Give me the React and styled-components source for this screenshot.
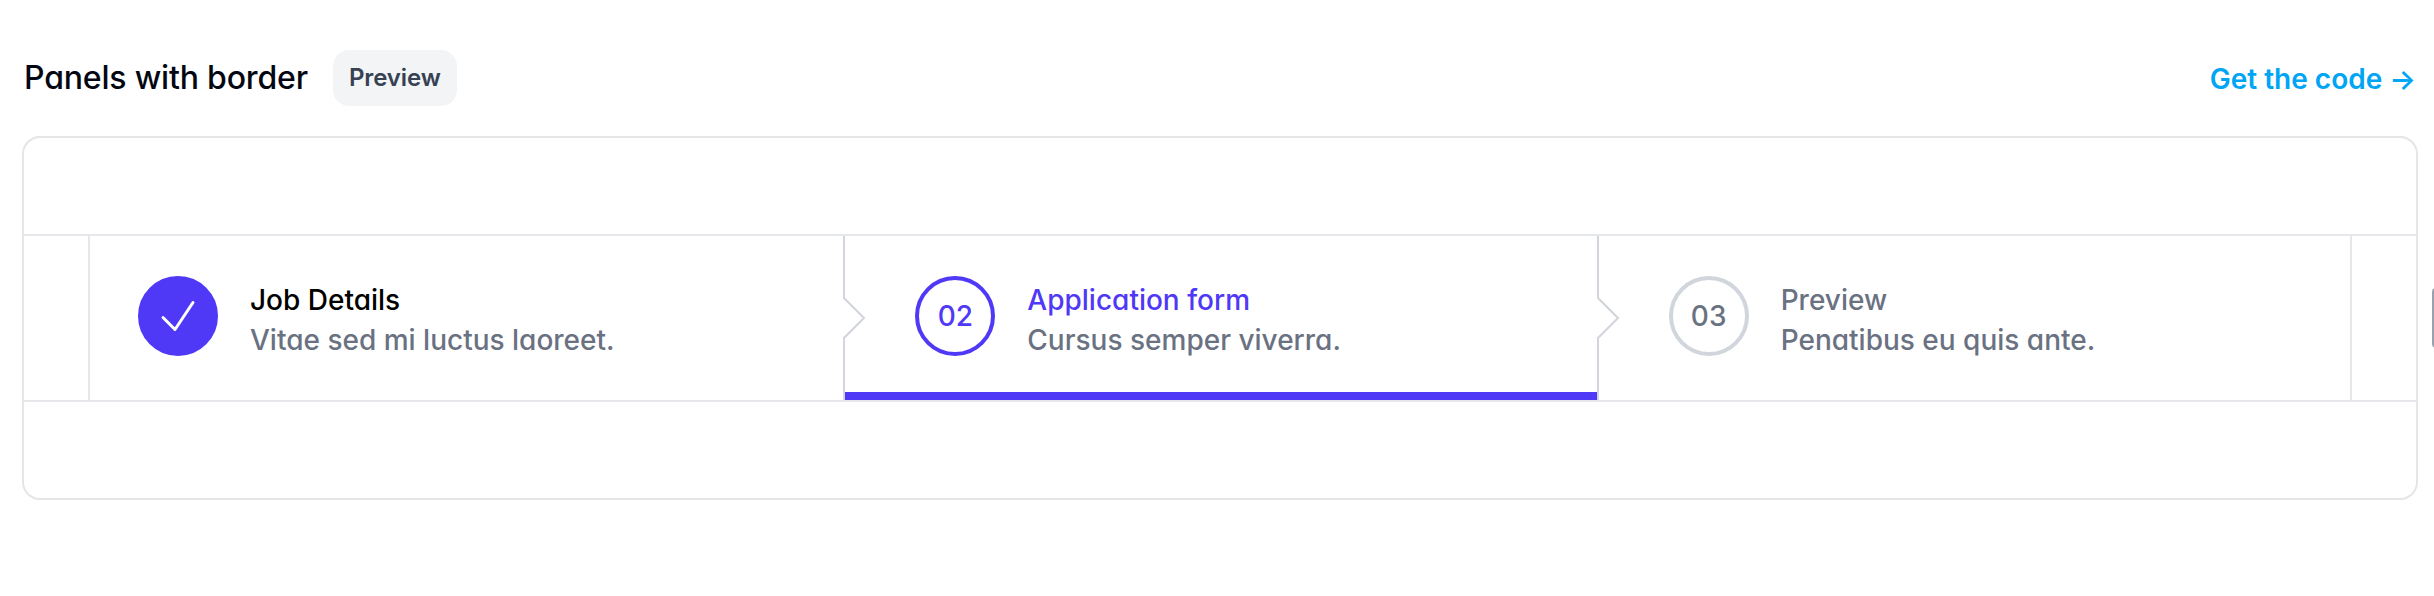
import React from "react";
import styled, { createGlobalStyle } from "styled-components";

const GlobalStyle = createGlobalStyle`
  *, *::before, *::after { box-sizing: border-box; }
  body {
    margin: 0;
    background: #fff;
    overflow: hidden;
    font-family: Inter, "Liberation Sans", sans-serif;
    font-feature-settings: "cv11";
    -webkit-font-smoothing: antialiased;
  }
`;

const Page = styled.main`
  position: relative;
  height: 596px;
  padding: 50px 16px 0 22px;
  overflow: hidden;
`;

const Header = styled.header`
  display: flex;
  align-items: center;
  height: 56px;
  padding: 0 2px;
  margin-bottom: 30px;
`;

const Title = styled.h2`
  margin: 0;
  width: 309px;
  font-size: 32px;
  line-height: 56px;
  font-weight: 500;
  letter-spacing: -0.18px;
  white-space: nowrap;
  color: #030712;
`;

const Badge = styled.span`
  padding: 0 16px;
  height: 56px;
  border-radius: 16px;
  background: #f3f4f6;
  color: #364153;
  font-size: 24px;
  line-height: 56px;
  font-weight: 600;
  letter-spacing: -0.12px;
`;

const CodeLink = styled.a`
  margin-left: auto;
  color: #00a6f4;
  font-size: 28px;
  line-height: 56px;
  padding-top: 1px;
  font-weight: 600;
  text-decoration: none;
`;

const Frame = styled.section`
  height: 364px;
  padding: 96px 0;
  border: 2px solid #e5e5e5;
  border-radius: 18px;
`;

const Band = styled.div`
  height: 168px;
  padding: 0 64px;
  border: solid #e5e7eb;
  border-width: 2px 0;
`;

const Steps = styled.ol`
  display: grid;
  grid-template-columns: repeat(3, 1fr);
  height: 164px;
  margin: 0;
  padding: 0;
  list-style: none;
  border: solid #e5e7eb;
  border-width: 0 2px;
`;

const Step = styled.li`
  position: relative;
  display: flex;
  align-items: flex-start;
  gap: 32px;
  padding: 40px 48px 40px ${(p) => (p.$first ? 48 : 72)}px;
`;

const tones = {
  complete: { ring: "#4f39f6", fill: "#4f39f6", number: "#fff", name: "#000" },
  current: { ring: "#4f39f6", fill: "none", number: "#4f39f6", name: "#4f39f6" },
  upcoming: { ring: "#d1d5dc", fill: "none", number: "#6a7282", name: "#6a7282" },
};

const Marker = styled.span`
  display: flex;
  flex: none;
  align-items: center;
  justify-content: center;
  width: 80px;
  height: 80px;
  border: 4px solid ${(p) => tones[p.$status].ring};
  border-radius: 50%;
  background: ${(p) => tones[p.$status].fill};
  color: ${(p) => tones[p.$status].number};
  font-size: 28px;
  font-weight: 500;
`;

const Copy = styled.div`
  margin-top: 4px;
  font-size: 28px;
  line-height: 40px;
  font-weight: 500;
  white-space: nowrap;
`;

const Name = styled.div`
  color: ${(p) => tones[p.$status].name};
`;

const Description = styled.div`
  color: #6a7282;
`;

const ActiveBar = styled.span`
  position: absolute;
  left: 0;
  right: 0;
  bottom: 0;
  height: 8px;
  background: #4f39f6;
`;

const Divider = styled.svg`
  position: absolute;
  top: 0;
  left: 0;
  width: 24px;
  height: 100%;
  color: #d1d5dc;
`;

const ResizeHandle = styled.span`
  position: absolute;
  top: 288px;
  left: 2432px;
  width: 12px;
  height: 60px;
  border-radius: 4px;
  background: #99a1af;
`;

const steps = [
  { id: "01", name: "Job Details", description: "Vitae sed mi luctus laoreet.", status: "complete" },
  { id: "02", name: "Application form", description: "Cursus semper viverra.", status: "current" },
  { id: "03", name: "Preview", description: "Penatibus eu quis ante.", status: "upcoming" },
];

function Check() {
  return (
    <svg width="48" height="48" viewBox="0 0 24 24" fill="currentColor" aria-hidden="true">
      <path
        fillRule="evenodd"
        clipRule="evenodd"
        d="M19.916 4.626a.75.75 0 0 1 .208 1.04l-9 13.5a.75.75 0 0 1-1.154.114l-6-6a.75.75 0 0 1 1.06-1.06l5.353 5.353 8.493-12.74a.75.75 0 0 1 1.04-.207Z"
      />
    </svg>
  );
}

export default function App() {
  return (
    <>
      <GlobalStyle />
      <Page>
        <Header>
          <Title>Panels with border</Title>
          <Badge>Preview</Badge>
          <CodeLink>Get the code →</CodeLink>
        </Header>
        <Frame>
          <Band>
            <Steps>
              {steps.map((s, i) => (
                <Step key={s.id} $first={i === 0}>
                  {s.status === "current" && <ActiveBar />}
                  <Marker $status={s.status}>{s.status === "complete" ? <Check /> : s.id}</Marker>
                  <Copy>
                    <Name $status={s.status}>{s.name}</Name>
                    <Description>{s.description}</Description>
                  </Copy>
                  {i > 0 && (
                    <Divider viewBox="0 0 12 82" fill="none" preserveAspectRatio="none" aria-hidden="true">
                      <path d="M0.5 0V31L10.5 41L0.5 51V82" stroke="currentColor" />
                    </Divider>
                  )}
                </Step>
              ))}
            </Steps>
          </Band>
        </Frame>
        <ResizeHandle />
      </Page>
    </>
  );
}
